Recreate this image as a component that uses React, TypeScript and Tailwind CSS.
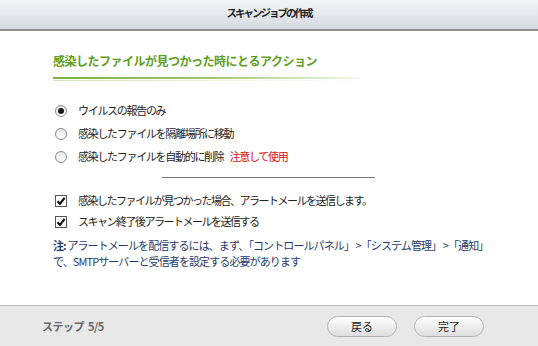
const font = "font-['MS_UI_Gothic','Noto_Sans_CJK_JP',sans-serif]";

function Radio({ checked }: { checked?: boolean }) {
  return (
    <span className="w-[12px] h-[12px] rounded-full border border-[#8a8a8a] bg-gradient-to-b from-[#e6e6e6] to-white flex items-center justify-center shrink-0">
      {checked && <span className="w-[6px] h-[6px] rounded-full bg-[#1a1a1a]" />}
    </span>
  );
}

function Check() {
  return (
    <span className="w-[12px] h-[12px] border border-[#555] bg-white flex items-center justify-center shrink-0">
      <svg width="10" height="10" viewBox="0 0 10 10">
        <path d="M1.5 5.2 L4 7.8 L8.6 1.8" fill="none" stroke="#111" strokeWidth="2.2" />
      </svg>
    </span>
  );
}

const radios = [
  { label: 'ウイルスの報告のみ', checked: true },
  { label: '感染したファイルを隔離場所に移動' },
  { label: '感染したファイルを自動的に削除', warn: '注意して使用' },
];

const checks = [
  '感染したファイルが見つかった場合、アラートメールを送信します。',
  'スキャン終了後アラートメールを送信する',
];

export default function App() {
  return (
    <div className={`w-[538px] h-[346px] flex flex-col bg-white ${font}`}>
      {/* title bar */}
      <div className="h-[31px] shrink-0 border-b-2 border-[#8e8e8e] bg-gradient-to-b from-[#f4f5f7] to-[#d5dae0] flex items-center justify-center">
        <span className="text-[10.5px] font-bold text-[#222] tracking-[-2px] pb-[3px]">スキャンジョブの作成</span>
      </div>

      <main className="flex-1 pl-[53px] pt-[22px]">
        <h1 className="text-[12px] leading-[16px] font-bold text-[#5f9e1e] tracking-[-0.5px]">
          感染したファイルが見つかった時にとるアクション
        </h1>
        <div className="mt-[8px] w-[307px] flex flex-col gap-[1px]">
          <div className="h-[2px] bg-gradient-to-r from-[#7db23c] via-[#9cc66a] to-[#f4f8ee]" />
          <div className="h-[1px] bg-gradient-to-r from-[#cfe3b5] to-white" />
        </div>

        <div className="mt-[18px] flex flex-col text-[11px] text-[#222] tracking-[-1.3px]">
          {radios.map((r) => (
            <div key={r.label} className="h-[23px] flex items-center pl-[2px] gap-[11px]">
              <Radio checked={r.checked} />
              <span>
                {r.label}
                {r.warn && <span className="text-[#e01010] ml-[6px]">{r.warn}</span>}
              </span>
            </div>
          ))}
        </div>

        <div className="mt-[9px] ml-[109px] w-[213px] h-[1px] bg-[#777]" />

        <div className="mt-[12px] flex flex-col text-[11px] text-[#222] tracking-[-1.5px]">
          {checks.map((c) => (
            <div key={c} className="h-[21px] flex items-center pl-[2px] gap-[11px]">
              <Check />
              <span>{c}</span>
            </div>
          ))}
        </div>

        <p className="mt-[5px] text-[11px] leading-[16px] text-[#1f3b6d] tracking-[-0.9px]">
          <span className="font-bold">注: </span>
          アラートメールを配信するには、まず、「コントロールパネル」 &gt;「システム管理」 &gt;「通知」
          <br />
          で、SMTPサーバーと受信者を設定する必要があります
        </p>
      </main>

      {/* footer */}
      <footer className="h-[41px] shrink-0 border-t border-[#bdbdbd] bg-[#e8e8e8] flex items-center pl-[42px] pr-[54px]">
        <span className="text-[11px] font-bold text-[#666] tracking-[-0.5px]">ステップ&nbsp;&nbsp;5/5</span>
        <div className="ml-auto flex gap-[17px]">
          {['戻る', '完了'].map((b) => (
            <button
              key={b}
              className="w-[70px] h-[21px] rounded-full border border-[#b4b4b4] bg-gradient-to-b from-white to-[#dedede] text-[11px] text-[#222] flex items-center justify-center"
            >
              {b}
            </button>
          ))}
        </div>
      </footer>
    </div>
  );
}
